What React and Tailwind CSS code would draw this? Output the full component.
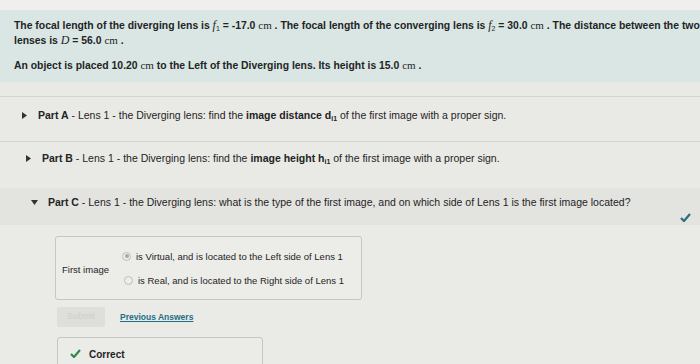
function Tri({ open }) {
  return open ? (
    <svg width="7" height="5" viewBox="0 0 7 5" className="shrink-0">
      <path d="M0 0 L7 0 L3.5 5 Z" fill="#333" />
    </svg>
  ) : (
    <svg width="5" height="7" viewBox="0 0 5 7" className="shrink-0">
      <path d="M0 0 L5 3.5 L0 7 Z" fill="#333" />
    </svg>
  );
}

function Cm() {
  return <span className="font-['Liberation_Serif',serif] font-normal text-[11px]">cm</span>;
}

function Var({ children }) {
  return <span className="font-['Liberation_Serif',serif] italic font-normal text-[12px]">{children}</span>;
}

export default function App() {
  return (
    <div className="w-[700px] h-[364px] overflow-hidden bg-[#e9e9e6] font-['Liberation_Sans',Arial,sans-serif] text-[#1f2424]">
      <div className="h-[10px] bg-[#efefed]" />
      <div className="h-[72px] bg-[#d9e6e4] pl-[14px] pr-1 pt-[8px] text-[10.4px] font-bold leading-[14px]">
        <p className="whitespace-nowrap">
          The focal length of the diverging lens is <Var>f</Var>
          <sub className="font-normal text-[7px]">1</sub> = -17.0 <Cm /> . The focal length of the converging lens is <Var>f</Var>
          <sub className="font-normal text-[7px]">2</sub> = 30.0 <Cm /> . The distance between the two
        </p>
        <p>
          lenses is <Var>D</Var> = 56.0 <Cm /> .
        </p>
        <p className="mt-[10px]">
          An object is placed 10.20 <Cm /> to the Left of the Diverging lens. Its height is 15.0 <Cm /> .
        </p>
      </div>

      <div className="h-[14px]" />

      <div className="h-[46px] flex items-start gap-[11px] pl-[22px] pt-[11px] border-y border-[#d4d4d1] text-[10.5px] leading-[14px]">
        <span className="mt-[4px]"><Tri /></span>
        <p>
          <b>Part A</b> - Lens 1 - the Diverging lens: find the <b>image distance d<sub className="text-[7px]">i1</sub></b> of the first image with a proper sign.
        </p>
      </div>

      <div className="h-[46px] flex items-start gap-[11px] pl-[26px] pt-[9px] text-[10.5px] leading-[14px]">
        <span className="mt-[4px]"><Tri /></span>
        <p>
          <b>Part B</b> - Lens 1 - the Diverging lens: find the <b>image height h<sub className="text-[7px]">i1</sub></b> of the first image with a proper sign.
        </p>
      </div>

      <div className="relative h-[37px] bg-[#e3e3e0] flex items-start gap-[10px] pl-[31px] pt-[7px] text-[10.5px] leading-[14px]">
        <span className="mt-[5px]"><Tri open /></span>
        <p>
          <b>Part C</b> - Lens 1 - the Diverging lens: what is the type of the first image, and on which side of Lens 1 is the first image located?
        </p>
        <svg width="11" height="9" viewBox="0 0 11 9" className="absolute right-[9px] bottom-[3px]">
          <path d="M1 5 L4 8 L10 1" stroke="#2b6f78" strokeWidth="2.2" fill="none" />
        </svg>
      </div>

      <div className="pl-[55px] pt-[11px] bg-[#eaeae7]">
        <div className="w-[307px] h-[64px] border border-[#c6c6c3] rounded-[3px] bg-[#ecece9] flex items-center pl-[6px] text-[9.5px] leading-[11px]">
          <span className="w-[60px] mt-[2px]">First image</span>
          <div className="flex flex-col gap-[13px]">
            <label className="flex items-center gap-[5px]">
              <span className="w-[9px] h-[9px] rounded-full border border-[#bdbdbb] flex items-center justify-center">
                <span className="w-[4px] h-[4px] rounded-full bg-[#a9a9a7]" />
              </span>
              <span>is Virtual, and is located to the Left side of Lens 1</span>
            </label>
            <label className="flex items-center gap-[5px] ml-[2px]">
              <span className="w-[9px] h-[9px] rounded-full border border-[#bdbdbb]" />
              <span>is Real, and is located to the Right side of Lens 1</span>
            </label>
          </div>
        </div>

        <div className="ml-[2px] mt-[7px] flex items-center gap-[15px]">
          <button className="w-[48px] h-[20px] bg-[#dededb] text-[#cfcfcc] text-[9px] rounded-[2px]">Submit</button>
          <a className="text-[#1d6f86] text-[8.5px] font-bold underline">Previous Answers</a>
        </div>

        <div className="ml-[2px] mt-[10px] w-[206px] h-[40px] border border-[#c6c6c3] rounded-[3px] bg-[#ebebe8] flex items-start pt-[9px] pl-[12px] gap-[8px] text-[10px] font-bold">
          <svg width="11" height="9" viewBox="0 0 11 9" className="mt-[2px]">
            <path d="M1 5 L4 8 L10 1" stroke="#2f8a47" strokeWidth="2.2" fill="none" />
          </svg>
          <span>Correct</span>
        </div>
      </div>
    </div>
  );
}
